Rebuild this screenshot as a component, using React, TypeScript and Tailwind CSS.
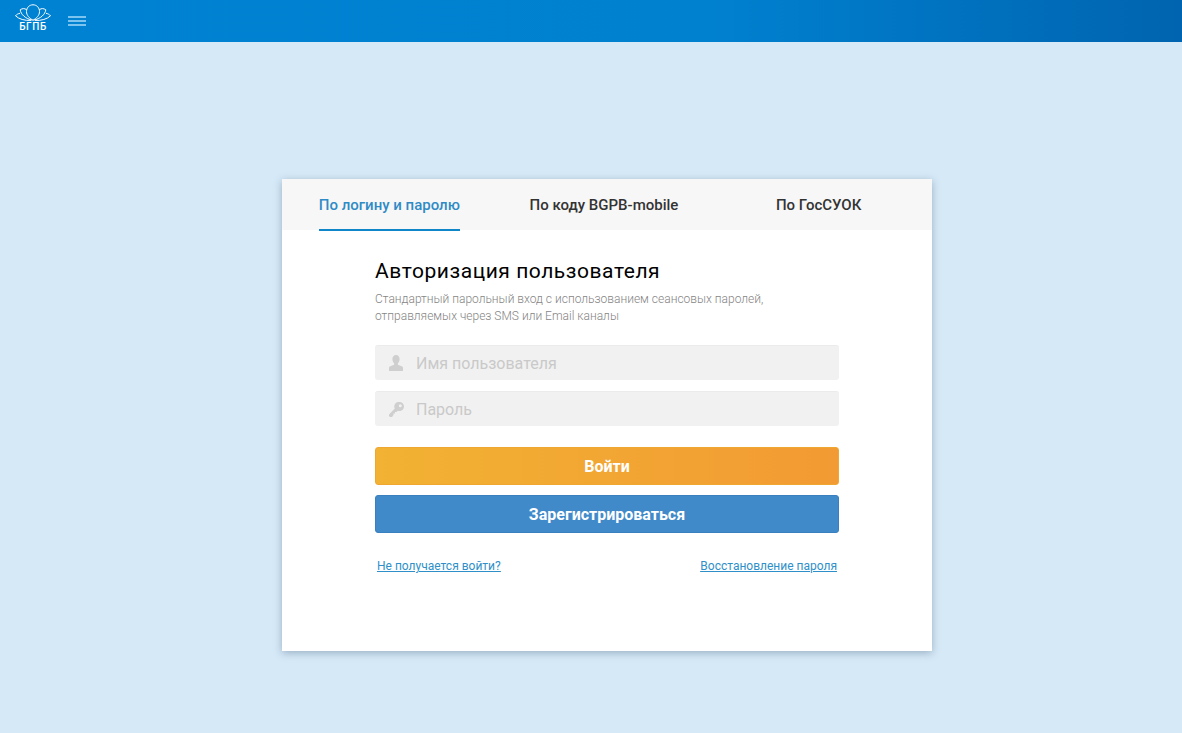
const tabs = ["По логину и паролю", "По коду BGPB-mobile", "По ГосСУОК"];

function Logo() {
  return (
    <div className="mb-[6px] flex w-[36px] flex-col items-center">
      <svg width="36" height="18" viewBox="0 0 36 18" fill="none" stroke="white" strokeWidth="1">
        <path d="M18 .8c3.800 0 6.500 2.900 6.500 6.800 0 3.800-2.900 6.600-6.500 8.600-3.600-2-6.500-4.800-6.500-8.600C11.500 3.700 14.200.8 18 .8z" />
        <path d="M11.600 5.600C9.400 4.200 7.300 4.300 5.200 5.800c.6 4.600 5.300 9 12.300 10.400" />
        <path d="M24.400 5.600c2.200-1.400 4.300-1.300 6.400.2-.6 4.600-5.300 9-12.300 10.400" />
        <path d="M5 9.300c-1.900.3-3.400 1.200-4.500 2.500 3.300 3.300 9.300 5 15.500 4.600" />
        <path d="M31 9.300c1.900.3 3.400 1.200 4.500 2.500-3.300 3.300-9.300 5-15.500 4.600" />
      </svg>
      <span className="text-[10px] leading-[10px] font-medium tracking-[0.6px] text-white">БГПБ</span>
    </div>
  );
}

function UserIcon() {
  return (
    <svg width="14" height="16" viewBox="0 0 14 16" fill="#cfcfcf">
      <path d="M7 0C4.800 0 3.400 1.700 3.400 4c0 1.800.7 3.300 1.700 4.200v1.500L1.300 11.300C.4 11.700 0 12.400 0 13.300V16h14v-2.700c0-.9-.4-1.600-1.300-2L8.900 9.700V8.200c1-.9 1.700-2.400 1.700-4.200C10.600 1.700 9.200 0 7 0z" />
    </svg>
  );
}

function KeyIcon() {
  return (
    <svg width="15" height="15" viewBox="0 0 15 15" fill="#cfcfcf">
      <path fillRule="evenodd" d="M10.500 0a4.500 4.500 0 0 1 0 9c-.6 0-1.100-.1-1.600-.3L7.500 10.100H6v1.500H4.500V13l-1.500 2H1l-1-1v-1.500l5.800-6A4.500 4.500 0 0 1 10.500 0zm.8 2.200a1.500 1.500 0 1 0 0 3 1.500 1.500 0 0 0 0-3z" />
    </svg>
  );
}

function Field({ icon, label }: { icon: React.ReactNode; label: string }) {
  return (
    <div className="flex h-[35px] items-center rounded-[3px] border-t border-[#ebebeb] bg-[#f1f1f1]">
      <div className="flex w-[41px] justify-center pl-[1px]">{icon}</div>
      <span className="pt-[1px] text-[16px] text-[#c9c9c9]">{label}</span>
    </div>
  );
}

export default function App() {
  return (
    <div className="min-h-[733px] bg-[#d6e9f7] font-['Roboto',sans-serif]">
      <header className="flex h-[42px] items-center gap-[17px] bg-[linear-gradient(90deg,#0082d2_0%,#0081d0_60%,#0064b0_100%)] pl-[15px]">
        <Logo />
        <div className="flex w-[18px] flex-col gap-[2px]">
          <div className="h-[2px] bg-[#7cc4f0]" />
          <div className="h-[2px] bg-[#7cc4f0]" />
          <div className="h-[2px] bg-[#7cc4f0]" />
        </div>
      </header>

      <main className="flex justify-center pl-[32px] pt-[137px]">
        <div className="h-[472px] w-[650px] bg-white shadow-[0_2px_8px_rgba(60,90,120,0.4)]">
          <div className="grid h-[51px] grid-cols-3 bg-[#f7f7f7] pr-[6px]">
            {tabs.map((t, i) => (
              <div key={t} className="flex justify-center">
                <div
                  className={
                    i === 0
                      ? "h-[52px] border-b-2 border-[#0f86c8] pt-[16px] text-[15px] leading-[20px] font-medium text-[#2f8bc6]"
                      : "pt-[16px] text-[15px] leading-[20px] font-medium text-[#333333]"
                  }
                >
                  {t}
                </div>
              </div>
            ))}
          </div>

          <div className="mx-[93px] pt-[27px]">
            <h1 className="text-[21px] leading-[28px] font-normal tracking-[0.55px] text-black">Авторизация пользователя</h1>
            <p className="mt-[6px] text-[12px] leading-[17px] font-light text-[#858585]">
              Стандартный парольный вход с использованием сеансовых паролей,
              <br />
              отправляемых через SMS или Email каналы
            </p>

            <div className="mt-[20px] flex flex-col gap-[11px]">
              <Field icon={<UserIcon />} label="Имя пользователя" />
              <Field icon={<KeyIcon />} label="Пароль" />
            </div>

            <div className="mt-[21px] flex flex-col gap-[10px]">
              <button className="h-[38px] rounded-[3px] border border-[#f0a732] bg-[linear-gradient(90deg,#f2b233,#f29a33)] pt-[1px] text-[16px] font-bold text-white">
                Войти
              </button>
              <button className="h-[38px] rounded-[3px] border border-[#3a7fbe] bg-[#418aca] pt-[1px] text-[16px] font-bold text-white">
                Зарегистрироваться
              </button>
            </div>

            <div className="mt-[25px] flex justify-between px-[2px] text-[12px] leading-[17px] text-[#2f8fc9] underline">
              <a href="#">Не получается войти?</a>
              <a href="#">Восстановление пароля</a>
            </div>
          </div>
        </div>
      </main>
    </div>
  );
}
